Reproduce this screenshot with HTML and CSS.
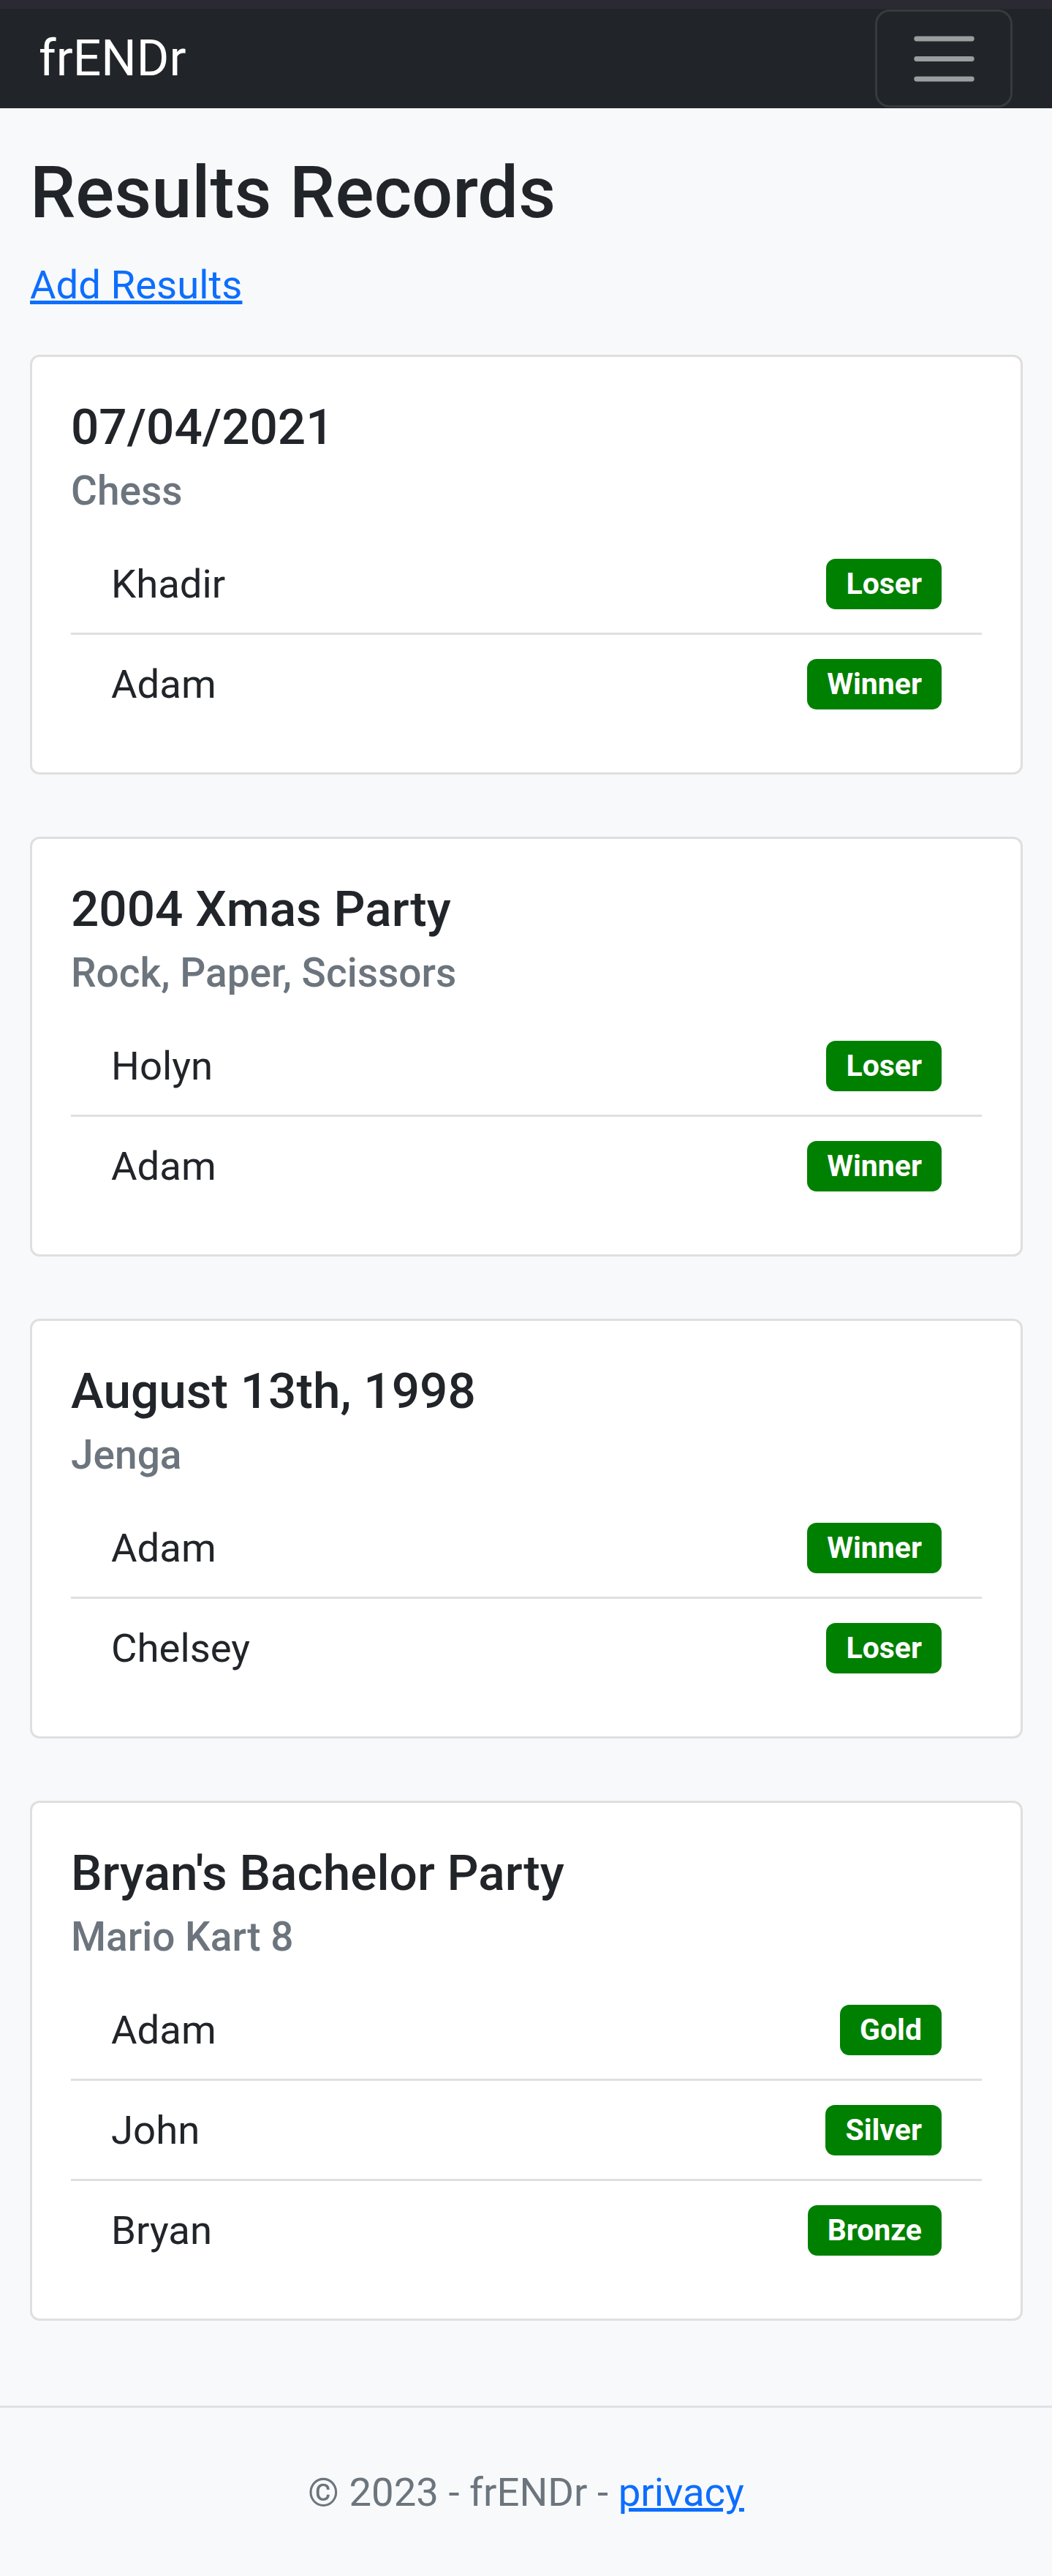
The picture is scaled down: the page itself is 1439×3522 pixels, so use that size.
FILE: index.html
```html
<!DOCTYPE html>
<html lang="en">
<head>
<meta charset="utf-8">
<title>Results Records - frENDr</title>
<link rel="stylesheet" href="styles.css">
</head>
<body>
<div class="topstrip"></div>
<header class="navbar">
  <a class="brand" href="#">frENDr</a>
  <button class="toggler" type="button" aria-label="Toggle navigation">
    <svg viewBox="0 0 30 30" xmlns="http://www.w3.org/2000/svg"><path d="M4 7h22M4 15h22M4 23h22" stroke="#9b9d9f" stroke-width="2" stroke-linecap="round" fill="none"/></svg>
  </button>
</header>
<main class="main">
  <h1 class="page-title">Results Records</h1>
  <p class="add-row"><a href="#">Add Results</a></p>

  <div class="card">
    <h5 class="card-title">07/04/2021</h5>
    <h6 class="card-subtitle">Chess</h6>
    <ul class="list">
      <li class="item"><span>Khadir</span><span class="badge">Loser</span></li>
      <li class="item"><span>Adam</span><span class="badge">Winner</span></li>
    </ul>
  </div>

  <div class="card">
    <h5 class="card-title">2004 Xmas Party</h5>
    <h6 class="card-subtitle">Rock, Paper, Scissors</h6>
    <ul class="list">
      <li class="item"><span>Holyn</span><span class="badge">Loser</span></li>
      <li class="item"><span>Adam</span><span class="badge">Winner</span></li>
    </ul>
  </div>

  <div class="card">
    <h5 class="card-title">August 13th, 1998</h5>
    <h6 class="card-subtitle">Jenga</h6>
    <ul class="list">
      <li class="item"><span>Adam</span><span class="badge">Winner</span></li>
      <li class="item"><span>Chelsey</span><span class="badge">Loser</span></li>
    </ul>
  </div>

  <div class="card">
    <h5 class="card-title">Bryan's Bachelor Party</h5>
    <h6 class="card-subtitle">Mario Kart 8</h6>
    <ul class="list">
      <li class="item"><span>Adam</span><span class="badge">Gold</span></li>
      <li class="item"><span>John</span><span class="badge">Silver</span></li>
      <li class="item"><span>Bryan</span><span class="badge">Bronze</span></li>
    </ul>
  </div>
</main>
<footer class="footer">
  © 2023 - frENDr - <a href="#">privacy</a>
</footer>
</body>
</html>
```
FILE: styles.css
```css
* { box-sizing: border-box; }
html, body { margin: 0; padding: 0; }
body {
  font-family: Roboto, "Liberation Sans", sans-serif;
  font-size: 54.5px;
  line-height: 82px;
  color: #212529;
  background: #f8f9fa;
}
a { color: #0d6efd; }

.topstrip { height: 12px; background: #2b2a33; }
.navbar {
  height: 136px;
  background: #212529;
  display: flex;
  align-items: center;
  justify-content: space-between;
  padding: 0 54px 0 53px;
}
.brand {
  color: #fff;
  font-size: 68px;
  line-height: 102px;
  text-decoration: none;
}
.toggler {
  width: 188px;
  height: 134px;
  border: 3px solid #373b3e;
  border-radius: 20px;
  background: transparent;
  display: flex;
  align-items: center;
  justify-content: center;
  padding: 0;
}
.toggler svg { width: 103px; height: 103px; display: block; }

.main { padding: 57px 40px 31px 41px; }
.page-title {
  font-size: 99px;
  font-weight: 500;
  line-height: 116px;
  margin: 0 0 27px;
}
.add-row { margin: 0 0 55px; }

.card {
  background: #fff;
  border: 3px solid #dfdfdf;
  border-radius: 13px;
  padding: 54px 53px;
  margin-bottom: 85px;
}
.card-title {
  font-size: 67.5px;
  font-weight: 500;
  line-height: 83px;
  margin: 0 0 27px;
}
.card-subtitle {
  font-size: 55px;
  font-weight: 500;
  line-height: 66px;
  color: #6c757d;
  margin: -14px 0 27px;
}
.list { list-style: none; margin: 0; padding: 0; }
.item {
  display: flex;
  align-items: center;
  justify-content: space-between;
  padding: 26px 55px;
  border-bottom: 3px solid #dfdfdf;
}
.item:last-child { border-bottom: 0; }
.badge {
  background: #008000;
  color: #fff;
  font-size: 41px;
  font-weight: 700;
  line-height: 1;
  padding: 14px 27px;
  border-radius: 13px;
}

.footer {
  border-top: 3px solid #dee2e6;
  padding: 74px 0 74px;
  text-align: center;
  color: #6c757d;
}
```
